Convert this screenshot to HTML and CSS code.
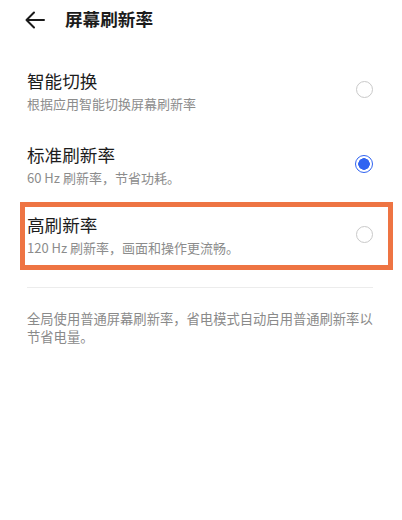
FILE: index.html
```html
<!DOCTYPE html>
<html lang="zh-CN">
<head>
<meta charset="utf-8">
<link rel="stylesheet" href="styles.css">
</head>
<body>
<header class="topbar">
  <svg class="back" width="20" height="18" viewBox="0 0 20 18"><path d="M1.5 9H19M9 1.5L1.5 9L9 16.5" fill="none" stroke="#1a1a1a" stroke-width="2" stroke-linecap="round" stroke-linejoin="round"/></svg>
  <h1 class="title">屏幕刷新率</h1>
</header>
<main class="list">
  <div class="item item-first">
    <div class="text">
      <div class="name">智能切换</div>
      <div class="desc">根据应用智能切换屏幕刷新率</div>
    </div>
    <span class="radio"></span>
  </div>
  <div class="item item-second">
    <div class="text">
      <div class="name">标准刷新率</div>
      <div class="desc">60 Hz 刷新率，节省功耗。</div>
    </div>
    <span class="radio checked"></span>
  </div>
  <div class="item highlight">
    <div class="text">
      <div class="name">高刷新率</div>
      <div class="desc">120 Hz 刷新率，画面和操作更流畅。</div>
    </div>
    <span class="radio"></span>
  </div>
  <hr class="divider">
  <p class="note">全局使用普通屏幕刷新率，省电模式自动启用普通刷新率以节省电量。</p>
</main>
</body>
</html>
```
FILE: styles.css
```css
* { box-sizing: border-box; }
html, body { margin: 0; padding: 0; background: #fff; }
body {
  width: 402px;
  height: 520px;
  overflow: hidden;
  font-family: "Noto Sans CJK SC", "Noto Sans", sans-serif;
  color: #1c1c1c;
}
.topbar {
  height: 38px;
  display: flex;
  align-items: center;
  padding-left: 25px;
}
.back { display: block; margin-top: 1px; }
.title {
  margin: 0 0 0 20px;
  font-size: 17.6px;
  font-weight: 600;
  line-height: 24px;
}
.list {
  padding: 0 29px 0 27px;
}
.item {
  display: flex;
  align-items: center;
  justify-content: space-between;
}
.item-first { margin-top: 30.5px; }
.item-second { margin-top: 30.5px; }
.text { display: flex; flex-direction: column; }
.name {
  font-size: 17.6px;
  line-height: 24px;
  color: #1c1c1c;
}
.desc {
  margin-top: 2px;
  font-size: 13px;
  line-height: 18px;
  color: #8c8c8c;
}
.radio {
  width: 17px;
  height: 17px;
  border-radius: 50%;
  border: 1.5px solid #c9c9c9;
  margin-bottom: 2px;
  flex: none;
}
.radio.checked {
  width: 18px;
  height: 18px;
  border: 1.5px solid #2f63f1;
  background: radial-gradient(circle, #2f63f1 0 5.5px, #fff 6px);
}
.highlight {
  margin: 15px -20px 0 -7px;
  border: 5px solid #ee7443;
  padding: 6px 15px 8px 2px;
}
.divider {
  margin: 17px 0 0 0;
  border: 0;
  border-top: 1px solid #ececec;
  height: 0;
}
.note {
  margin: 22px -6px 0 0;
  font-size: 13.3px;
  line-height: 18px;
  color: #8a8a8a;
}
```
